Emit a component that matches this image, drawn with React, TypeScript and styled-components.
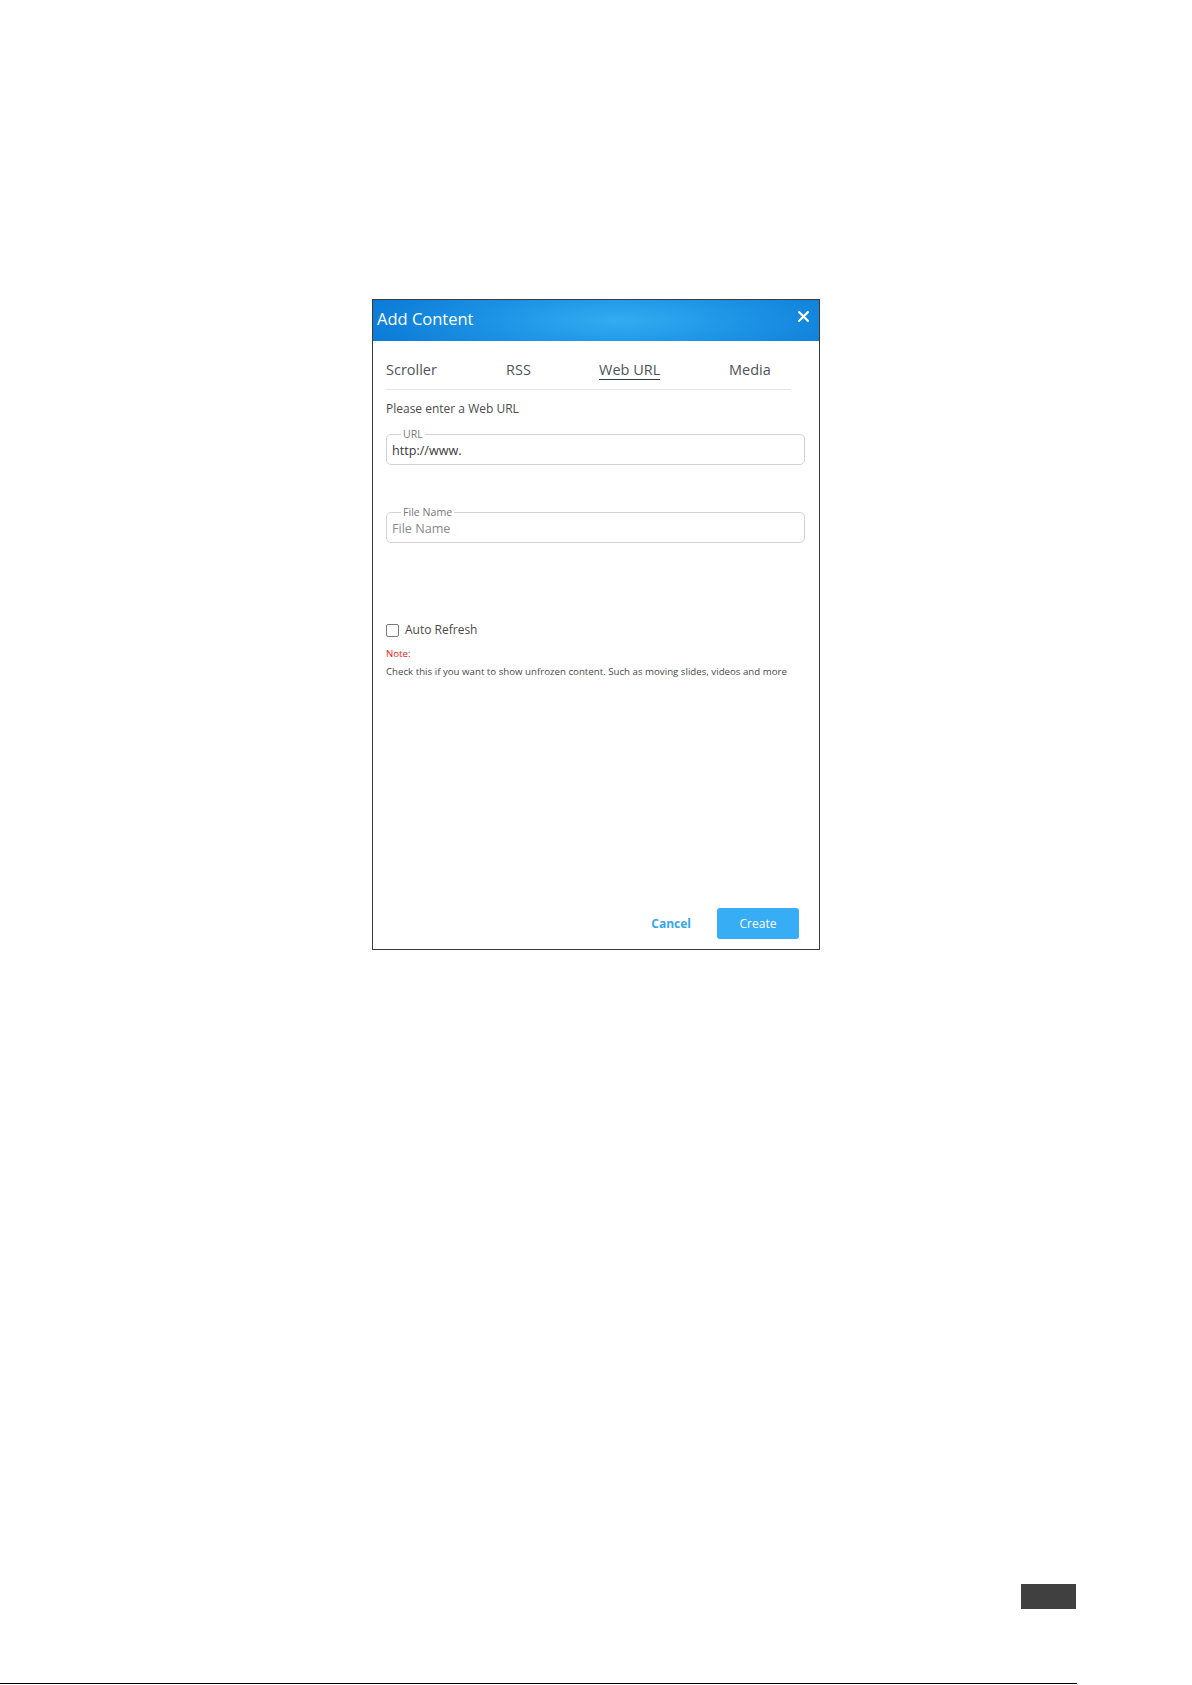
import React from "react";
import styled, { createGlobalStyle } from "styled-components";

const GlobalStyle = createGlobalStyle`
  html, body { margin: 0; padding: 0; background: #ffffff; }
  body { font-family: "Open Sans", "Noto Sans", Arial, sans-serif; }
  * { box-sizing: border-box; }
`;

const Page = styled.div`
  width: 1192px;
  height: 1685px;
  display: flex;
  flex-direction: column;
  padding-top: 299px;
`;

const Dialog = styled.div`
  margin-left: 372px;
  width: 448px;
  height: 651px;
  border: 1px solid #3b3b3b;
  display: flex;
  flex-direction: column;
  background: #fff;
`;

const Header = styled.div`
  height: 41px;
  display: flex;
  align-items: center;
  justify-content: space-between;
  padding: 0 9px 4px 4px;
  background: radial-gradient(ellipse 60% 140% at 55% 50%, #33acf1 0%, #1c92e4 50%, #0a79d6 100%);
`;

const Title = styled.h1`
  margin: 0;
  font-size: 16.5px;
  font-weight: 400;
  color: #ffffff;
  letter-spacing: 0;
`;

const CloseButton = styled.button`
  border: 0;
  background: none;
  padding: 0;
  width: 13px;
  height: 13px;
  display: flex;
  align-items: center;
  justify-content: center;
  margin-top: -5px;
  cursor: pointer;
`;

const Body = styled.div`
  flex: 1;
  display: flex;
  flex-direction: column;
  padding: 0 14px 10px 13px;
`;

const TabBar = styled.div`
  display: grid;
  grid-template-columns: 120px 93px 130px auto;
  margin: 20px 14px 0 0;
  padding-bottom: 9px;
  border-bottom: 1px solid #e6e6e6;
`;

const Tab = styled.div<{ $active?: boolean }>`
  justify-self: start;
  font-size: 14.5px;
  line-height: 18px;
  color: #4d535a;
  border-bottom: 1px solid ${(p) => (p.$active ? "#2f3e4e" : "transparent")};
`;

const Prompt = styled.div`
  margin-top: 11px;
  font-size: 12px;
  line-height: 16px;
  color: #4a4a4a;
`;

const Field = styled.fieldset<{ $gap: number }>`
  margin: ${(p) => p.$gap}px 0 0 0;
  padding: 0 5px 3px 5px;
  border: 1px solid #d2d2d2;
  border-radius: 5px;
  min-width: 0;
`;

const Legend = styled.legend`
  margin-left: 9px;
  padding: 0 2px;
  font-size: 10.6px;
  line-height: 12px;
  color: #777;
`;

const Input = styled.input`
  display: block;
  width: 100%;
  height: 21px;
  border: 0;
  outline: none;
  padding: 0;
  font-family: "Open Sans", Arial, sans-serif;
  font-size: 12.6px;
  color: #383838;
  background: transparent;
  &::placeholder { color: #8a8a8a; }
`;

const CheckRow = styled.label`
  margin-top: 79px;
  display: flex;
  align-items: center;
  gap: 6px;
  font-size: 12px;
  line-height: 16px;
  color: #4a4a4a;
`;

const Box = styled.span`
  width: 13px;
  height: 13px;
  border: 1px solid #7a7a7a;
  border-radius: 2px;
  background: #fff;
`;

const Note = styled.div`
  margin-top: 9px;
  font-size: 9.7px;
  line-height: 14px;
  color: #f01414;
`;

const Hint = styled.div`
  margin-top: 4px;
  font-size: 9.7px;
  line-height: 14px;
  color: #4a4a4a;
  white-space: nowrap;
`;

const Footer = styled.div`
  margin-top: auto;
  display: flex;
  justify-content: flex-end;
  align-items: center;
  gap: 16px;
  padding-right: 6px;
`;

const TextButton = styled.button`
  border: 0;
  background: none;
  padding: 0 10px;
  font-family: "Open Sans", Arial, sans-serif;
  font-size: 12px;
  font-weight: 700;
  color: #35a6ec;
  cursor: pointer;
`;

const PrimaryButton = styled.button`
  width: 82px;
  height: 31px;
  border: 0;
  border-radius: 3px;
  background: #37adf6;
  color: #fff;
  font-family: "Open Sans", Arial, sans-serif;
  font-size: 12px;
  cursor: pointer;
`;

const PageFoot = styled.div`
  margin-top: auto;
  display: flex;
  flex-direction: column;
`;

const PageTab = styled.div`
  margin-left: 1021px;
  width: 55px;
  height: 25px;
  background: #404040;
  margin-bottom: 74px;
`;

const Rule = styled.div`
  width: 1077px;
  height: 1px;
  background: #000;
  margin-bottom: 1px;
`;

export default function App() {
  return (
    <>
      <GlobalStyle />
      <Page>
        <Dialog>
          <Header>
            <Title>Add Content</Title>
            <CloseButton aria-label="Close">
              <svg width="11" height="11" viewBox="0 0 11 11">
                <path d="M1.2 1.2 L9.8 9.8 M9.8 1.2 L1.2 9.8" stroke="#fff" strokeWidth="2.2" strokeLinecap="square" />
              </svg>
            </CloseButton>
          </Header>
          <Body>
            <TabBar>
              <Tab>Scroller</Tab>
              <Tab>RSS</Tab>
              <Tab $active>Web URL</Tab>
              <Tab>Media</Tab>
            </TabBar>
            <Prompt>Please enter a Web URL</Prompt>
            <Field $gap={11}>
              <Legend>URL</Legend>
              <Input defaultValue="http://www." />
            </Field>
            <Field $gap={41}>
              <Legend>File Name</Legend>
              <Input placeholder="File Name" />
            </Field>
            <CheckRow>
              <Box />
              Auto Refresh
            </CheckRow>
            <Note>Note:</Note>
            <Hint>Check this if you want to show unfrozen content. Such as moving slides, videos and more</Hint>
            <Footer>
              <TextButton>Cancel</TextButton>
              <PrimaryButton>Create</PrimaryButton>
            </Footer>
          </Body>
        </Dialog>
        <PageFoot>
          <PageTab />
          <Rule />
        </PageFoot>
      </Page>
    </>
  );
}
